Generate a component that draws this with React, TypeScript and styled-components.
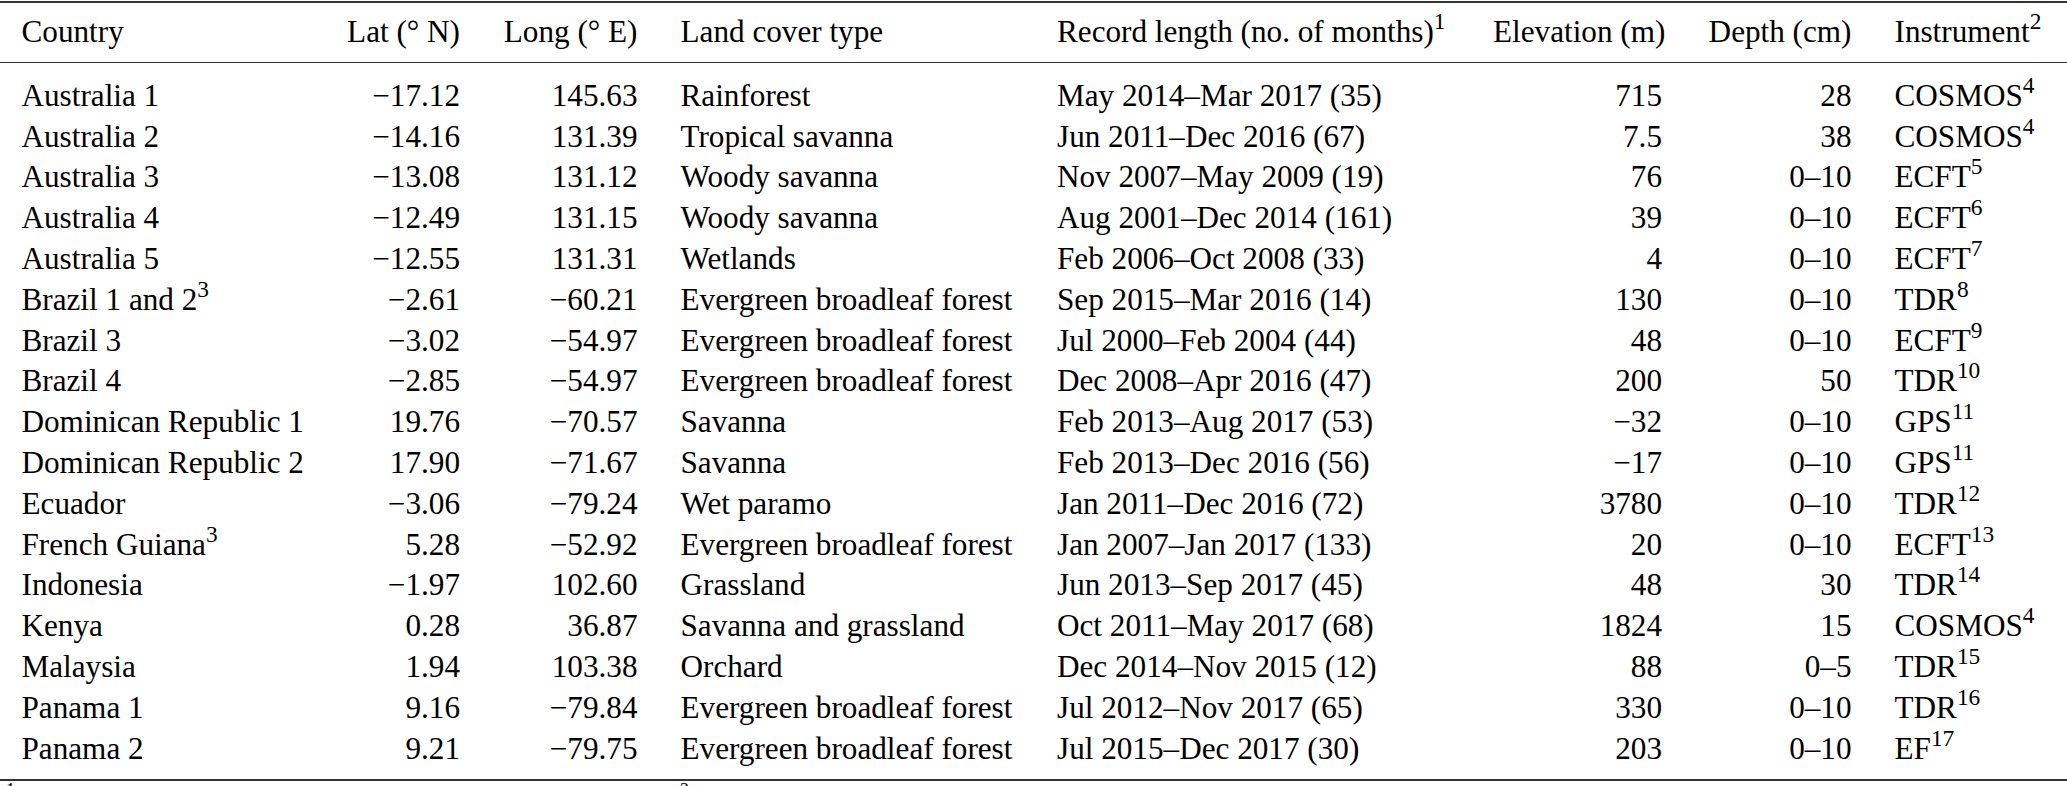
import React from 'react'
import styled, { createGlobalStyle } from 'styled-components'

const GlobalStyle = createGlobalStyle`
  html,
  body {
    margin: 0;
    padding: 0;
    background: #fff;
    overflow: hidden;
  }
`

type Align = 'left' | 'right'

interface Column {
  title: React.ReactNode
  align: Align
}

// column tracks measured off the reference, gutters are 2 x 21.5px
const TRACKS = '324px 157.5px 177.5px 376.5px 436px 212px 189.5px 194px'

const Page = styled.div`
  width: 2067px;
  font-family: 'Liberation Serif', Tinos, 'Times New Roman', 'Nimbus Roman', 'DejaVu Serif', serif;
  font-size: 31.2px;
  color: #000;
`

const Row = styled.div`
  display: grid;
  grid-template-columns: ${TRACKS};
  line-height: 40.8px;
  height: 40.8px;
`

const Head = styled.div`
  margin-top: 1px;
  border-top: 2px solid #333;
  border-bottom: 1.2px solid #333;
  padding: 9px 0 9.6px;
`

const Body = styled.div`
  padding: 12.5px 0 9.5px;
  border-bottom: 2px solid #333;
`

const Cell = styled.div<{ $align: Align }>`
  padding: 0 21.5px;
  text-align: ${(p) => p.$align};
  white-space: nowrap;
`

const Sup = styled.sup`
  font-size: 0.75em;
  line-height: 0;
  vertical-align: 0.54em;
`

// table notes sit under the bottom rule; only the tops of their markers fit in the window
const Notes = styled.div`
  display: grid;
  grid-template-columns: 674px 1fr;
  padding-top: 2px;
  font-size: 24px;
  line-height: 30px;
  white-space: nowrap;
`

const Note = styled.div`
  padding-left: 6px;
`

const columns: Column[] = [
  { title: 'Country', align: 'left' },
  { title: 'Lat (° N)', align: 'right' },
  { title: 'Long (° E)', align: 'right' },
  { title: 'Land cover type', align: 'left' },
  { title: <>Record length (no. of months)<Sup>1</Sup></>, align: 'left' },
  { title: 'Elevation (m)', align: 'right' },
  { title: 'Depth (cm)', align: 'right' },
  { title: <>Instrument<Sup>2</Sup></>, align: 'left' },
]

// [country, note, lat, long, cover, record, elevation, depth, instrument, ref]
type Site = [string, string, string, string, string, string, string, string, string, string]

const EBF = 'Evergreen broadleaf forest'

const sites: Site[] = [
  ['Australia 1', '', '−17.12', '145.63', 'Rainforest', 'May 2014–Mar 2017 (35)', '715', '28', 'COSMOS', '4'],
  ['Australia 2', '', '−14.16', '131.39', 'Tropical savanna', 'Jun 2011–Dec 2016 (67)', '7.5', '38', 'COSMOS', '4'],
  ['Australia 3', '', '−13.08', '131.12', 'Woody savanna', 'Nov 2007–May 2009 (19)', '76', '0–10', 'ECFT', '5'],
  ['Australia 4', '', '−12.49', '131.15', 'Woody savanna', 'Aug 2001–Dec 2014 (161)', '39', '0–10', 'ECFT', '6'],
  ['Australia 5', '', '−12.55', '131.31', 'Wetlands', 'Feb 2006–Oct 2008 (33)', '4', '0–10', 'ECFT', '7'],
  ['Brazil 1 and 2', '3', '−2.61', '−60.21', EBF, 'Sep 2015–Mar 2016 (14)', '130', '0–10', 'TDR', '8'],
  ['Brazil 3', '', '−3.02', '−54.97', EBF, 'Jul 2000–Feb 2004 (44)', '48', '0–10', 'ECFT', '9'],
  ['Brazil 4', '', '−2.85', '−54.97', EBF, 'Dec 2008–Apr 2016 (47)', '200', '50', 'TDR', '10'],
  ['Dominican Republic 1', '', '19.76', '−70.57', 'Savanna', 'Feb 2013–Aug 2017 (53)', '−32', '0–10', 'GPS', '11'],
  ['Dominican Republic 2', '', '17.90', '−71.67', 'Savanna', 'Feb 2013–Dec 2016 (56)', '−17', '0–10', 'GPS', '11'],
  ['Ecuador', '', '−3.06', '−79.24', 'Wet paramo', 'Jan 2011–Dec 2016 (72)', '3780', '0–10', 'TDR', '12'],
  ['French Guiana', '3', '5.28', '−52.92', EBF, 'Jan 2007–Jan 2017 (133)', '20', '0–10', 'ECFT', '13'],
  ['Indonesia', '', '−1.97', '102.60', 'Grassland', 'Jun 2013–Sep 2017 (45)', '48', '30', 'TDR', '14'],
  ['Kenya', '', '0.28', '36.87', 'Savanna and grassland', 'Oct 2011–May 2017 (68)', '1824', '15', 'COSMOS', '4'],
  ['Malaysia', '', '1.94', '103.38', 'Orchard', 'Dec 2014–Nov 2015 (12)', '88', '0–5', 'TDR', '15'],
  ['Panama 1', '', '9.16', '−79.84', EBF, 'Jul 2012–Nov 2017 (65)', '330', '0–10', 'TDR', '16'],
  ['Panama 2', '', '9.21', '−79.75', EBF, 'Jul 2015–Dec 2017 (30)', '203', '0–10', 'EF', '17'],
]

const SiteRow = ({ site }: { site: Site }) => {
  const [country, note, lat, long, cover, record, elev, depth, instr, ref] = site
  const values: React.ReactNode[] = [
    <>{country}{note && <Sup>{note}</Sup>}</>,
    lat,
    long,
    cover,
    record,
    elev,
    depth,
    <>{instr}<Sup>{ref}</Sup></>,
  ]
  return (
    <Row>
      {values.map((v, i) => (
        <Cell key={i} $align={columns[i].align}>
          {v}
        </Cell>
      ))}
    </Row>
  )
}

export default function App() {
  return (
    <>
      <GlobalStyle />
      <Page>
        <Head>
          <Row>
            {columns.map((c, i) => (
              <Cell key={i} $align={c.align}>
                {c.title}
              </Cell>
            ))}
          </Row>
        </Head>
        <Body>
          {sites.map((s) => (
            <SiteRow key={s[0]} site={s} />
          ))}
        </Body>
        <Notes>
          <Note>
            <Sup>1</Sup> Number of months with soil moisture data.
          </Note>
          <Note>
            <Sup>2</Sup> Measurement technique used at the site.
          </Note>
        </Notes>
      </Page>
    </>
  )
}
